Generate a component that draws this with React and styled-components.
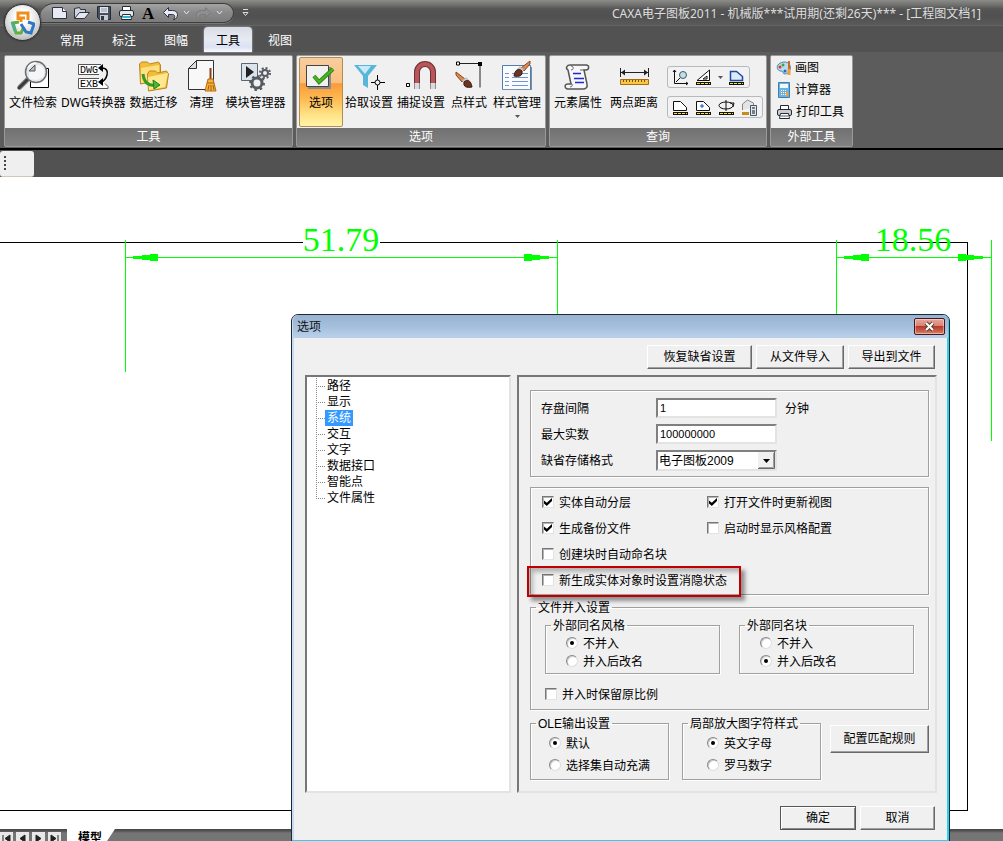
import React from 'react'
import styled, { createGlobalStyle, css } from 'styled-components'

const GlobalStyle = createGlobalStyle`
    * { box-sizing: border-box; }
    html, body { margin: 0; padding: 0; }
    body {
        font-family: "Noto Sans", "Noto Sans CJK SC", sans-serif;
        font-size: 12px;
        line-height: 16px;
        color: #000;
        background: #fff;
    }
    button, input, select { font: inherit; color: inherit; margin: 0; }
`

/* ---------- window ---------- */

const Window = styled.div`
    position: relative;
    display: flex;
    flex-direction: column;
    height: 100vh;
    overflow: hidden;
`

const TitleBar = styled.header`
    display: flex;
    align-items: flex-start;
    flex: none;
    height: 26px;
    padding-left: 40px;
    background: linear-gradient(#8c8c89 0, #6a6a68 6px, #555 9px, #505050 16px, #5a5a5a 25px, #636363 25px);
`

const Title = styled.h1`
    margin: 6px 22px 0 auto;
    font-size: 12px;
    font-weight: normal;
    color: #dedede;
    white-space: nowrap;
`

const AppButton = styled.button`
    position: absolute;
    left: 4px;
    top: 4px;
    z-index: 2;
    width: 37px;
    height: 37px;
    padding: 0;
    border: 1px solid #333;
    border-radius: 50%;
    background: radial-gradient(circle at 50% 35%, #fff 25%, #d6d6d6 60%, #9c9c9c);
    box-shadow: 0 0 2px #222;
    svg { display: block; margin: 5px auto; }
`

const QuickBar = styled.div`
    display: flex;
    align-items: center;
    height: 20px;
    margin-top: 3px;
    padding: 0 8px 0 9px;
    border: 1px solid #3e3e3e;
    border-left: 0;
    border-radius: 14px 10px 10px 0;
    background: linear-gradient(#a3a3a3, #888 50%, #7c7c7c);
    box-shadow: 0 1px 0 #777;
`

const QuickButton = styled.button`
    display: flex;
    align-items: center;
    justify-content: center;
    width: ${p => p.$narrow ? 11 : 22}px;
    height: 18px;
    padding: 0;
    border: 0;
    background: none;
`

const MoreButton = styled(QuickButton)`
    margin-top: 4px;
`

const TabRow = styled.nav`
    display: flex;
    align-items: flex-end;
    gap: 4px;
    flex: none;
    height: 27px;
    padding-left: 48px;
    background: #525252;
    border-bottom: 1px solid #5c5c5c;
`

const Tab = styled.button`
    width: 48px;
    height: 25px;
    padding: 2px 0 0;
    border: 0;
    border-radius: 4px 4px 0 0;
    background: none;
    color: #fff;
    ${p => p.$active && css`
        color: #000;
        background: linear-gradient(#d9dde6, #e8eaf2 50%, #dce2f4 80%, #f8f9fd);
        box-shadow: 0 0 2px #ccc;
    `}
`

/* ---------- ribbon ---------- */

const Ribbon = styled.div`
    display: flex;
    gap: 3px;
    flex: none;
    height: 97px;
    padding: 2px 4px;
    background: #5c5c5c;
    border-bottom: 2px solid #000;
`

const Panel = styled.section`
    display: flex;
    flex-direction: column;
    flex: none;
    width: ${p => p.$width}px;
    height: 92px;
    border: 1px solid #999;
    border-radius: 2px;
    background: #f0f0f0;
`

const PanelBody = styled.div`
    display: flex;
    flex: 1;
    padding: 1px 2px 0;
`

const PanelTitle = styled.h2`
    margin: 0;
    height: 18px;
    font-size: 12px;
    font-weight: normal;
    line-height: 17px;
    text-align: center;
    color: #fff;
    background: linear-gradient(#717171, #828282);
`

const BigButton = styled.button`
    display: flex;
    flex-direction: column;
    align-items: center;
    flex: none;
    min-width: 44px;
    height: 70px;
    padding: 2px 2px 0;
    border: 1px solid transparent;
    border-width: 1px 0;
    background: none;
    white-space: nowrap;
    span { margin-top: 3px; }
    ${p => p.$active && css`
        border: 1px solid #b08d54;
        border-radius: 2px;
        background: linear-gradient(#f8cda0, #fbc07e 36%, #fb9a3a 38%, #fdbd55 62%, #ffe58a 85%, #fff3a8);
    `}
`

const QueryTools = styled.div`
    display: flex;
    flex-direction: column;
    align-items: flex-start;
    gap: 8px;
    padding: 9px 0 0 3px;
`

const ToolStrip = styled.div`
    display: flex;
    align-items: center;
    height: 22px;
    padding: 0 1px;
    border: 1px solid #b4bac0;
    border-radius: 3px;
    background: #f2f2f2;
`

const SmallTool = styled.button`
    display: flex;
    align-items: center;
    justify-content: center;
    width: ${p => p.$narrow ? 10 : 23}px;
    height: 20px;
    padding: 0;
    border: 0;
    background: none;
`

const LinkTools = styled.div`
    display: flex;
    flex-direction: column;
    gap: 2px;
    padding: 1px 3px 0;
`

const LinkTool = styled.button`
    display: flex;
    align-items: center;
    gap: 3px;
    height: 20px;
    padding: 0;
    border: 0;
    background: none;
    white-space: nowrap;
`

const DockRow = styled.div`
    flex: none;
    height: 27px;
    padding-top: 1px;
    background: #525252;
`

const DockStub = styled.div`
    width: 34px;
    height: 26px;
    padding: 5px 4px;
    border-radius: 3px;
    background: #efefef;
    border-bottom: 1px solid #cfc9b4;
    svg { display: block; }
`

/* ---------- drawing area ---------- */

const Sheet = styled.main`
    flex: 1;
    min-height: 0;
    background: #fff;
    svg { display: block; width: 100%; height: 100%; }
`

const Footer = styled.footer`
    display: flex;
    align-items: flex-start;
    flex: none;
    height: 12px;
    overflow: hidden;
    background: linear-gradient(#444 0, #555 2px, #757575 4px, #757575);
`

const PageButton = styled.button`
    display: flex;
    align-items: center;
    justify-content: center;
    width: 13px;
    height: 13px;
    margin: 3px 3px 0 0;
    padding: 0;
    border: 0;
    background: #e8e8e8;
`

const SheetTab = styled.button`
    width: 48px;
    height: 18px;
    margin-left: 3px;
    padding: 0 10px 0 8px;
    border: 0;
    background: #fff;
    clip-path: polygon(0 0, 100% 0, 36px 100%, 0 100%);
    font-weight: bold;
    line-height: 16px;
    white-space: nowrap;
`

/* ---------- dialog ---------- */

const Dialog = styled.div`
    position: absolute;
    left: 291px;
    top: 314px;
    width: 659px;
    border: 1px solid #1c2a38;
    border-radius: 7px 7px 0 0;
    background: #f0f0f0;
    box-shadow: inset -2px -1px 0 #2fd0ee, inset 2px 0 0 #c9dcef;
    padding: 0 2px 2px;
    font-family: "Liberation Sans", "Noto Sans CJK SC", sans-serif;
`

const DialogTitle = styled.div`
    display: flex;
    justify-content: space-between;
    height: 23px;
    margin: 0 -1px;
    padding: 0 3px 0 4px;
    border-radius: 6px 6px 0 0;
    line-height: 24px;
    color: #111;
    background: linear-gradient(#98b2d0, #a4bfdc 50%, #bad1ea);
`

const CloseButton = styled.button`
    display: flex;
    align-items: center;
    justify-content: center;
    width: 31px;
    height: 17px;
    margin-top: 3px;
    padding: 0;
    border: 1px solid #4a1518;
    border-radius: 2px;
    background: linear-gradient(#e8a79b, #d98474 45%, #b8392a 50%, #c9604a 80%, #d98874);
    box-shadow: inset 0 0 0 1px rgba(255, 255, 255, .4);
`

const DialogBody = styled.div`
    padding: 7px 12px 9px 11px;
`

const ButtonRow = styled.div`
    display: flex;
    justify-content: flex-end;
    gap: 4px;
`

const PushButton = styled.button`
    width: ${p => p.$width}px;
    height: ${p => p.$tall ? 28 : 24}px;
    padding: 0;
    border: 1px solid;
    border-color: #fff #696969 #696969 #fff;
    background: #f0f0f0;
    box-shadow: inset -1px -1px 0 #a0a0a0;
    white-space: nowrap;
    ${p => p.$primary && css`
        border-color: #555;
        box-shadow: inset 1px 1px 0 #fff, inset -1px -1px 0 #888;
    `}
`

const Panes = styled.div`
    display: grid;
    grid-template-columns: 206px 1fr;
    gap: 6px;
    margin: 6px 0 13px;
`

const Tree = styled.ul`
    margin: 0;
    padding: 1px 0 0 9px;
    list-style: none;
    background: #fff;
    border: 2px solid;
    border-color: #777 #e3e3e3 #e3e3e3 #777;
`

const TreeItem = styled.li`
    display: flex;
    height: 16px;
    &::before {
        content: "";
        width: 9px;
        height: ${p => p.$last ? 9 : 16}px;
        background:
            repeating-linear-gradient(90deg, #888 0 1px, transparent 1px 2px) 0 8px / 9px 1px no-repeat,
            repeating-linear-gradient(#888 0 1px, transparent 1px 2px) 0 0 / 1px 100% no-repeat;
    }
    button {
        height: 16px;
        padding: 0 2px;
        border: 0;
        line-height: 16px;
        background: ${p => p.$selected ? '#3399ff' : 'none'};
        color: ${p => p.$selected ? '#fff' : '#000'};
    }
`

const Page = styled.div`
    padding: 13px 6px 11px 11px;
    border: 2px solid;
    border-color: #777 #e3e3e3 #e3e3e3 #777;
`

const etched = css`
    border: 1px solid #a0a0a0;
    box-shadow: 1px 1px 0 #fff, inset 1px 1px 0 #fff;
`

const FieldGroup = styled.div`
    ${etched}
    display: grid;
    grid-template-columns: 115px 121px 1fr;
    grid-auto-rows: 20px;
    row-gap: 6px;
    align-items: center;
    padding: 7px 10px 6px;
    label, span { padding-top: 2px; }
`

const TextBox = styled.input`
    width: 100%;
    height: 20px;
    padding: 0 2px;
    border: 2px solid;
    border-color: #808080 #e3e3e3 #e3e3e3 #808080;
    border-radius: 0;
    background: #fff;
    font-size: 11px;
    outline: 0;
`

const SelectBox = styled.div`
    position: relative;
    select {
        display: block;
        width: 100%;
        height: 21px;
        padding: 1px 1px 0;
        appearance: none;
        border: 2px solid;
        border-color: #808080 #e3e3e3 #e3e3e3 #808080;
        border-radius: 0;
        background: #fff;
    }
    svg {
        position: absolute;
        right: 2px;
        top: 2px;
        pointer-events: none;
    }
`

const Unit = styled.span`
    padding-left: 8px;
`

const CheckGroup = styled.div`
    ${etched}
    display: grid;
    grid-template-columns: 165px 1fr;
    row-gap: 6px;
    margin-top: 10px;
    padding: 4px 11px;
`

const Option = styled.label`
    position: relative;
    display: flex;
    align-items: center;
    gap: 5px;
    height: ${p => p.$height || 20}px;
    grid-column: ${p => p.$wide ? '1 / -1' : 'auto'};
    white-space: nowrap;
`

const OptionText = styled.span`
    padding-top: 2px;
`

const CheckInput = styled.input`
    appearance: none;
    flex: none;
    width: 12px;
    height: 12px;
    border: 1px solid;
    border-color: #777 #e3e3e3 #e3e3e3 #777;
    background: #fff;
    box-shadow: inset 1px 1px 0 #b4b4b4;
    &:checked::before {
        content: "";
        display: block;
        width: 8px;
        height: 8px;
        margin: 1px;
        background: #000;
        clip-path: polygon(0 30%, 35% 60%, 100% 0, 100% 38%, 35% 100%, 0 68%);
    }
`

const RadioInput = styled(CheckInput)`
    border-radius: 50%;
    border-color: #888 #ddd #ddd #888;
    box-shadow: inset 1px 1px 0 #ccc;
    &:checked::before {
        width: 4px;
        height: 4px;
        margin: 3px;
        border-radius: 50%;
        clip-path: none;
    }
`

const Highlight = styled.span`
    position: absolute;
    left: -15px;
    top: -4px;
    width: 214px;
    height: 31px;
    border: 2px solid #c00000;
    box-shadow: 4px 4px 4px rgba(0, 0, 0, .4), inset 4px 4px 4px rgba(0, 0, 0, .25);
    pointer-events: none;
`

const Fieldset = styled.fieldset`
    ${etched}
    min-width: 0;
    width: ${p => p.$width ? p.$width + 'px' : 'auto'};
    margin: ${p => p.$top || 0}px 0 0;
    padding: 0 5px;
    legend {
        height: 14px;
        padding: 0 2px;
        line-height: 16px;
    }
`

const MergeBody = styled.div`
    padding: 4px 8px 5px 9px;
`

const MergeRow = styled.div`
    display: flex;
    gap: 19px;
    margin-bottom: 10px;
`

const RadioList = styled.div`
    padding: 2px 0 3px ${p => p.$indent}px;
`

const BottomRow = styled.div`
    display: flex;
    align-items: flex-start;
    margin-top: 6px;
    fieldset { margin-right: 13px; }
    fieldset + fieldset { margin-right: 9px; }
    > button { margin-top: 9px; }
`

/* ---------- icons ---------- */

const LogoIcon = () => (
    <svg width="25" height="25" viewBox="0 0 25 25" fill="none" strokeWidth="3">
        <path d="M8 10V3h10v7M15 8h-4v4" stroke="#ef8e1d" />
        <path d="M9 12l-6 1 3 10h5l3-6" stroke="#63ae3c" />
        <path d="M2 12l3 9" stroke="#4cae8e" />
        <path d="M11 14l5 8 5 1 3-9-6-2" stroke="#2c78c5" />
    </svg>
)

const NewIcon = () => (
    <svg width="18" height="14" viewBox="0 0 18 14">
        <path d="M1.500 1.500h10l4 4v7h-14z" fill="#e7eaf2" stroke="#2d3340" />
        <path d="M11.500 1.500v4h4" fill="#fff" stroke="#2d3340" />
    </svg>
)

const OpenIcon = () => (
    <svg width="18" height="14" viewBox="0 0 18 14" stroke="#2d3340" strokeLinejoin="round">
        <path d="M1.500 12.500v-10l5-1 1 2h5v3" fill="#cfd4df" />
        <path d="M1.500 12.500l5-6h10l-5 6z" fill="#e4e8f1" />
    </svg>
)

const SaveIcon = () => (
    <svg width="16" height="16" viewBox="0 0 16 16">
        <path d="M1.500 1.500h13v13h-11l-2-2z" fill="#4a515e" stroke="#252b36" />
        <path d="M4 2h8v6H4z" fill="#dfe5ef" />
        <path d="M5 4h6M5 6h6" stroke="#8e97a8" />
        <path d="M4 10h8v5H4z" fill="#c5ccd8" />
        <path d="M5 11h3v4H5z" fill="#303744" />
    </svg>
)

const PrintIcon = ({ plain }) => (
    <svg width="17" height="16" viewBox="0 0 17 16" stroke="#222a33">
        <path d="M4.500 5.500v-4h8v4" fill="#fff" />
        <rect x="1.500" y="5.500" width="14" height="6" rx="1.500" fill={plain ? '#c9ccd2' : '#e4e8ee'} />
        <path d="M4.500 9.500h8l1 5h-10z" fill="#fff" />
        <path d="M5 12h7" stroke={plain ? '#aaa' : '#27b4d8'} strokeWidth="2" />
    </svg>
)

const LetterIcon = () => (
    <svg width="16" height="18" viewBox="0 0 16 18">
        <text x="2" y="15" fontFamily="Liberation Serif, serif" fontSize="17" fontWeight="bold">A</text>
    </svg>
)

const UndoIcon = ({ dim }) => (
    <svg width="17" height="15" viewBox="0 0 17 15">
        <g transform={dim ? 'matrix(-1 0 0 1 17 0)' : undefined}>
            <path
                d="M1.500 6.500l5-5v3h4c7 0 6 8 1 9.500 2-3 1.500-5.500-1-5.500h-4v3z"
                fill={dim ? '#8f8f8f' : '#e8ecf4'}
                stroke={dim ? '#7a7a7a' : '#2d3340'}
            />
        </g>
    </svg>
)

const ChevronIcon = () => (
    <svg width="7" height="6" viewBox="0 0 7 6">
        <path d="M1 1l2.500 3L6 1" fill="none" stroke="#e6e6e6" />
    </svg>
)

const MoreIcon = () => (
    <svg width="7" height="8" viewBox="0 0 7 8" fill="none" stroke="#ddd">
        <path d="M1 .5h5M1 3.500h5l-2.500 3z" />
    </svg>
)

const Arrow = () => (
    <svg width="5" height="3" viewBox="0 0 5 3"><path d="M0 0h5L2.500 3z" fill="#555" /></svg>
)

const Big = ({ children }) => (
    <svg width="32" height="32" viewBox="0 0 32 32" fill="none">{children}</svg>
)

const SearchIcon = () => (
    <Big>
        <path d="M13.500 8.500h18v19h-18z" fill="#fff" stroke="#000" />
        <path d="M11 19l-8 8" stroke="#888" strokeWidth="5" strokeLinecap="round" />
        <path d="M10 20l-8 8" stroke="#3b3b3b" strokeWidth="3" strokeLinecap="round" />
        <circle cx="19" cy="12" r="10.500" fill="#e3e6e8" stroke="#6c7074" strokeWidth="1.500" />
        <path d="M12 19V11l6-6h5a8 8 0 0 1 3 12l-6 3z" fill="#f5f6f7" />
        <path d="M12 11h6V5z" fill="#bbb" stroke="#555" />
        <path d="M11 8a9 9 0 0 1 8-5" stroke="#fff" strokeWidth="1.500" />
    </Big>
)

const ConvertIcon = () => (
    <Big>
        <path d="M24 4.500H1.500v10H22M22 18.500H1.500v10H31v-2l-3-3" fill="#fff" stroke="#555" />
        <text x="3" y="13" fill="#000" fontFamily="Liberation Mono, monospace" fontSize="10">DWG</text>
        <text x="3" y="27" fill="#000" fontFamily="Liberation Mono, monospace" fontSize="10">EXB</text>
        <path d="M25 8c5 0 6 4 5 7-1 4-3 6-6 7" stroke="#000" strokeWidth="1.500" />
        <path d="M21 8l5-4v8zM21 22l5-4v8z" fill="#000" />
    </Big>
)

const MigrateIcon = () => (
    <Big>
        <path d="M2.500 4l2-2h6l2 2 9-2 2 3v15l-20 4z" fill="#f2bd38" stroke="#bd861b" />
        <path d="M4 8l18-3v15L4 23z" fill="#ffe184" />
        <path d="M10.500 14l2-3h6l2 2 9-2 2 3-2 14-18 3z" fill="#f2bd38" stroke="#bd861b" />
        <path d="M11 17l20-4-3 14-16 3z" fill="#ffe88f" />
        <path d="M6 14c1 9 6 12 12 11" stroke="#329a27" strokeWidth="3" />
        <path d="M16 20l7 5-6 4z" fill="#4bb63a" stroke="#1e7f18" />
    </Big>
)

const CleanIcon = () => (
    <Big>
        <path d="M11.500.500h17v29h-25v-21z" fill="#f8f8f8" stroke="#333" />
        <path d="M11.500.500v8h-8z" fill="#ddd" stroke="#333" />
        <path d="M25.500 8v13" stroke="#8a3f1d" strokeWidth="2" />
        <path d="M23 19h5l3 12H20z" fill="#f5b33b" stroke="#b56c12" />
        <path d="M22 23h7M24 25l-1 5M26 25v6M28 25l1 5" stroke="#a85e0d" />
    </Big>
)

const ModuleIcon = () => (
    <Big>
        <path d="M2.500 3.500h16v17h-16z" fill="#dbe4ec" stroke="#5a6672" />
        <path d="M7 6l8 6-8 6z" fill="#222" />
        <circle cx="18" cy="23" r="5" fill="#f0f0f0" stroke="#555b60" strokeWidth="3" />
        <circle cx="18" cy="23" r="7" stroke="#555b60" strokeWidth="2" strokeDasharray="2.500 3" />
        <circle cx="26" cy="13" r="3" stroke="#555b60" strokeWidth="2" />
        <circle cx="26" cy="13" r="5" stroke="#555b60" strokeWidth="2" strokeDasharray="2 1.920" />
    </Big>
)

const OptionIcon = () => (
    <Big>
        <path d="M3 7h23v22H3z" fill="#8a8a8a" />
        <path d="M1.500 5.500h22v21h-22z" fill="#f1f1f1" stroke="#444" />
        <path d="M9 16l5 6L28 9" stroke="#2b8d0d" strokeWidth="4" />
        <path d="M9 16l5 6L28 9" stroke="#4eb422" strokeWidth="2" />
    </Big>
)

const FilterIcon = () => (
    <Big>
        <path d="M1 5h23L15 16v12l-5-3v-9z" fill="#58b6da" />
        <path d="M5 6h13l-6 8z" fill="#c7ebf7" />
        <path d="M24.500 15v5M24.500 25v5M18 22.500h4M27 22.500h5" stroke="#000" />
        <circle cx="24.500" cy="22.500" r="2.500" fill="#f0f0f0" stroke="#000" />
    </Big>
)

const MagnetIcon = () => (
    <Big>
        <path d="M12 29V12a8 8 0 0 1 16 0v17" stroke="#6f2f33" strokeWidth="6" />
        <path d="M12 24V12a8 8 0 0 1 16 0v12" stroke="#b8565a" strokeWidth="4" />
        <path d="M12 23v6M28 23v6" stroke="#d4dde2" strokeWidth="5" />
        <path d="M1.500 23.500h3v3h-3z" fill="#fff" stroke="#000" />
    </Big>
)

const Brush = () => (
    <>
        <path d="M1 1l9 7-3 3-6-7z" fill="#d88a55" stroke="#8d4520" />
        <path d="M7 10l4-4 3 3-3 4z" fill="#c8c8c8" />
        <path d="M9 11c3-3 7-2 8 5-5 1-9 0-8-5z" fill="#6d3520" stroke="#3a1a10" />
    </>
)

const PointStyleIcon = () => (
    <Big>
        <path d="M5 3.500h22v24" stroke="#222" />
        <path d="M3.500 2h3v3h-3z" fill="#fff" stroke="#000" />
        <path d="M25 2h4v4h-4z" fill="#000" />
        <g transform="translate(2 11)"><Brush /></g>
    </Big>
)

const StyleIcon = () => (
    <Big>
        <path d="M1.500 5.500h28v24h-28z" fill="#f8fbff" stroke="#567da8" />
        <path d="M2 29.500h28M30.500 7v23" stroke="#7890a8" />
        <path d="M4 13.500h4M4 17.500h4M4 21.500h4M4 25.500h4M11 13.500h16M11 17.500h16M11 21.500h16M11 25.500h16" stroke="#7896c4" />
        <g transform="matrix(-1 0 0 1 30 0)"><Brush /></g>
    </Big>
)

const ScrollIcon = () => (
    <Big>
        <path d="M8 5h16c4 0 3 5 0 5h-2l3 14c1 4-2 5-4 5H6c-4 0-4-6 1-5h2L6 10C3 8 5 5 8 5z" fill="#f7f7f7" stroke="#555" strokeWidth="1.500" />
        <path d="M9 6c3 0 3 4 0 4M22 10h-4M8 23c3 0 3 4 0 4" stroke="#666" />
        <path d="M11 13.500h8M12 18.500h10M13 22.500h9" stroke="#1b28d6" strokeWidth="1.500" />
    </Big>
)

const DistanceIcon = () => (
    <Big>
        <path d="M2.500 8v9M30.500 8v9M3 12.500h27" stroke="#222" />
        <path d="M3 12.500l4-3v6zM30 12.500l-4-3v6z" fill="#222" />
        <path d="M2.500 19.500h28v5h-28z" fill="#f8c93f" stroke="#a66b1a" />
        <path d="M5.500 20v2M8.500 20v2M11.500 20v2M14.500 20v2M17.500 20v2M20.500 20v2M23.500 20v2M26.500 20v2" stroke="#7f4c10" />
    </Big>
)

const Small = ({ children, bare }) => (
    <svg width="17" height="17" viewBox="0 0 17 17" fill="none" stroke="#111">
        {children}
        {!bare && <path d="M1 14.500h15" stroke="#111" strokeWidth="3" />}
        {!bare && <path d="M2 14.500h13" stroke="#ffe81a" strokeDasharray="3 1" />}
    </svg>
)

const smallTools = {
    angle: <Small bare><path d="M2.500 1v13.500H16M1 3l1.500-2L4 3M14 13l2 1.500-2 1.500M4 13l5-5" /><circle cx="11" cy="6" r="3.500" fill="#bfe0e5" stroke="#456" /></Small>,
    slope: <Small><path d="M2 11.500h12.500V1zM8 10l4-3v3z" fill="#fff" /></Small>,
    areaBlue: <Small><path d="M2.500 11.500v-9h6l6 5v4z" fill="#dcebfa" stroke="#1f4aa0" strokeWidth="1.500" /></Small>,
    area: <Small><path d="M1.500 11.500v-9h7l6 6v3z" fill="#fff" /></Small>,
    center: <Small><path d="M1.500 11.500v-9h7l6 6v3z" fill="#fff" /><path d="M7 5v4M5 7h4" stroke="#1a4fd0" /></Small>,
    inertia: <Small><ellipse cx="8" cy="6.500" rx="7" ry="3.500" /><path d="M8 1v11M12 4l4 0-1 4" /></Small>,
    weight: <Small bare><path d="M1.500 11V5l5-4 6 3v4" fill="#e4e4e4" stroke="#888" /><path d="M1 14.500h7" stroke="#c88a1d" strokeWidth="3" /><path d="M9.500 6.500h6v10h-6z" fill="#dfeaf0" stroke="#456" /><path d="M11 9h3M11 12h3M11 14h3" /></Small>
}

const PaintIcon = () => (
    <svg width="16" height="16" viewBox="0 0 16 16">
        <path d="M8 2c9 0 8 11 1 12-3 0-1-3-4-3-5 0-6-8 3-9z" fill="#b9dbee" stroke="#4a88ae" />
        <circle cx="4" cy="7" r="1.500" fill="#d93a2b" />
        <circle cx="7" cy="5" r="1.500" fill="#43a53c" />
        <circle cx="9" cy="11" r="1.500" fill="#3060c8" />
        <path d="M13 1v8" stroke="#cf6820" strokeWidth="2" />
        <path d="M13 9v6" stroke="#f0a038" strokeWidth="3" />
    </svg>
)

const CalcIcon = () => (
    <svg width="16" height="16" viewBox="0 0 16 16">
        <path d="M2.500.500h11v15h-11z" fill="#6db1de" stroke="#3b7fb0" />
        <path d="M4 2h8v4H4z" fill="#eef8fd" />
        <path d="M5 8.500h6M5 10.500h6M5 12.500h6" stroke="#fff" strokeDasharray="1 1" />
        <path d="M10 10h2v4h-2z" fill="#f1a040" />
    </svg>
)

/* ---------- parts ---------- */

const tools = [
    ['文件检索', <SearchIcon />],
    ['DWG转换器', <ConvertIcon />],
    ['数据迁移', <MigrateIcon />],
    ['清理', <CleanIcon />],
    ['模块管理器', <ModuleIcon />]
]

const options = [
    ['选项', <OptionIcon />],
    ['拾取设置', <FilterIcon />],
    ['捕捉设置', <MagnetIcon />],
    ['点样式', <PointStyleIcon />],
    ['样式管理', <StyleIcon />]
]

const queries = [
    ['元素属性', <ScrollIcon />],
    ['两点距离', <DistanceIcon />]
]

const QueryButton = styled(BigButton)`
    margin-right: 4px;
`

const DropMark = styled.i`
    display: flex;
    margin-top: 4px;
`

const RibbonBar = () => (
    <Ribbon>
        <Panel $width={289}>
            <PanelBody>
                {tools.map(([name, icon]) => <BigButton key={name}>{icon}<span>{name}</span></BigButton>)}
            </PanelBody>
            <PanelTitle>工具</PanelTitle>
        </Panel>
        <Panel $width={250}>
            <PanelBody>
                {options.map(([name, icon]) => (
                    <BigButton key={name} $active={name === '选项'}>
                        {icon}<span>{name}</span>
                        {name === '样式管理' && <DropMark><Arrow /></DropMark>}
                    </BigButton>
                ))}
            </PanelBody>
            <PanelTitle>选项</PanelTitle>
        </Panel>
        <Panel $width={218}>
            <PanelBody>
                {queries.map(([name, icon]) => <QueryButton key={name}>{icon}<span>{name}</span></QueryButton>)}
                <QueryTools>
                    <ToolStrip>
                        <SmallTool aria-label="坐标">{smallTools.angle}</SmallTool>
                        <SmallTool aria-label="角度">{smallTools.slope}</SmallTool>
                        <SmallTool aria-label="更多" $narrow><Arrow /></SmallTool>
                        <SmallTool aria-label="周长">{smallTools.areaBlue}</SmallTool>
                    </ToolStrip>
                    <ToolStrip>
                        <SmallTool aria-label="面积">{smallTools.area}</SmallTool>
                        <SmallTool aria-label="重心">{smallTools.center}</SmallTool>
                        <SmallTool aria-label="惯性矩">{smallTools.inertia}</SmallTool>
                        <SmallTool aria-label="重量">{smallTools.weight}</SmallTool>
                    </ToolStrip>
                </QueryTools>
            </PanelBody>
            <PanelTitle>查询</PanelTitle>
        </Panel>
        <Panel $width={83}>
            <PanelBody>
                <LinkTools>
                    <LinkTool><PaintIcon />画图</LinkTool>
                    <LinkTool><CalcIcon />计算器</LinkTool>
                    <LinkTool><PrintIcon plain />打印工具</LinkTool>
                </LinkTools>
            </PanelBody>
            <PanelTitle>外部工具</PanelTitle>
        </Panel>
    </Ribbon>
)

const arrowHead = 'M8 -1h9v3h-9zM17 -2h8v5h-8zM25 -3h8v7h-8z'

const Drawing = () => (
    <Sheet>
        <svg shapeRendering="crispEdges">
            <g stroke="#000" fill="none">
                <path d="M0 65.500h303M380 65.500h587.500V633.500H0" />
            </g>
            <g stroke="#0f0" fill="none">
                <path d="M125.500 63v132M557.500 63v200M125 80.500h432" />
                <path d="M836.500 63v200M991.500 63v201M836 80.500h155" />
            </g>
            <g fill="#0f0">
                <path d={arrowHead} transform="translate(125 80)" />
                <path d={arrowHead} transform="matrix(-1 0 0 1 557 80)" />
                <path d={arrowHead} transform="translate(836 80)" />
                <path d={arrowHead} transform="matrix(-1 0 0 1 991 80)" />
            </g>
            <g fill="#0f0" fontFamily="Liberation Serif, serif" fontSize="34" textAnchor="middle">
                <text x="341" y="74">51.79</text>
                <text x="913" y="74">18.56</text>
            </g>
        </svg>
    </Sheet>
)

const pageArrows = [
    ['首页', 'M1 1v7M8 1v7L3 4.500z'],
    ['上一页', 'M7 1v7L2 4.500z'],
    ['下一页', 'M2 1v7l5-3.500z'],
    ['末页', 'M8 1v7M1 1v7l5-3.500z']
]

const Check = ({ label, checked, wide, marked }) => (
    <Option $wide={wide}>
        <CheckInput type="checkbox" defaultChecked={checked} />
        <OptionText>{label}</OptionText>
        {marked && <Highlight />}
    </Option>
)

const Radios = ({ name, items, selected, indent, height }) => (
    <RadioList $indent={indent}>
        {items.map(item => (
            <Option key={item} $height={height}>
                <RadioInput type="radio" name={name} defaultChecked={item === selected} />
                <OptionText>{item}</OptionText>
            </Option>
        ))}
    </RadioList>
)

const sections = ['路径', '显示', '系统', '交互', '文字', '数据接口', '智能点', '文件属性']

const OptionsDialog = () => (
    <Dialog role="dialog" aria-labelledby="options-title">
        <DialogTitle>
            <span id="options-title">选项</span>
            <CloseButton aria-label="关闭">
                <svg width="13" height="11" viewBox="0 0 13 11" fill="none">
                    <path d="M3 2l7 7M10 2L3 9" stroke="#543" strokeWidth="4" />
                    <path d="M3 2l7 7M10 2L3 9" stroke="#fff" strokeWidth="2" />
                </svg>
            </CloseButton>
        </DialogTitle>
        <DialogBody>
            <ButtonRow>
                <PushButton $width={105}>恢复缺省设置</PushButton>
                <PushButton $width={88}>从文件导入</PushButton>
                <PushButton $width={87}>导出到文件</PushButton>
            </ButtonRow>
            <Panes>
                <Tree>
                    {sections.map((name, i) => (
                        <TreeItem key={name} $selected={name === '系统'} $last={i === sections.length - 1}>
                            <button>{name}</button>
                        </TreeItem>
                    ))}
                </Tree>
                <Page>
                    <FieldGroup>
                        <label htmlFor="interval">存盘间隔</label>
                        <TextBox id="interval" defaultValue="1" />
                        <Unit>分钟</Unit>
                        <label htmlFor="max-real">最大实数</label>
                        <TextBox id="max-real" defaultValue="100000000" />
                        <span />
                        <label htmlFor="format">缺省存储格式</label>
                        <SelectBox>
                            <select id="format"><option>电子图板2009</option></select>
                            <svg width="17" height="17" viewBox="0 0 17 17">
                                <path d="M0 0h17v17H0z" fill="#f0f0f0" />
                                <path d="M16.500 0v16.500H0" fill="none" stroke="#696969" />
                                <path d="M15.500 1v14.500H1" fill="none" stroke="#a0a0a0" />
                                <path d="M5 7h7l-3.500 4z" />
                            </svg>
                        </SelectBox>
                    </FieldGroup>
                    <CheckGroup>
                        <Check label="实体自动分层" checked />
                        <Check label="打开文件时更新视图" checked />
                        <Check label="生成备份文件" checked />
                        <Check label="启动时显示风格配置" />
                        <Check label="创建块时自动命名块" wide />
                        <Check label="新生成实体对象时设置消隐状态" wide marked />
                    </CheckGroup>
                    <Fieldset $top={5}>
                        <legend>文件并入设置</legend>
                        <MergeBody>
                            <MergeRow>
                                <Fieldset $width={175}>
                                    <legend>外部同名风格</legend>
                                    <Radios name="style" items={['不并入', '并入后改名']} selected="不并入" indent={15} height={18} />
                                </Fieldset>
                                <Fieldset $width={175}>
                                    <legend>外部同名块</legend>
                                    <Radios name="block" items={['不并入', '并入后改名']} selected="并入后改名" indent={15} height={18} />
                                </Fieldset>
                            </MergeRow>
                            <Check label="并入时保留原比例" />
                        </MergeBody>
                    </Fieldset>
                    <BottomRow>
                        <Fieldset $width={139}>
                            <legend>OLE输出设置</legend>
                            <Radios name="ole" items={['默认', '选择集自动充满']} selected="默认" indent={13} height={22} />
                        </Fieldset>
                        <Fieldset $width={139}>
                            <legend>局部放大图字符样式</legend>
                            <Radios name="detail" items={['英文字母', '罗马数字']} selected="英文字母" indent={19} height={22} />
                        </Fieldset>
                        <PushButton $width={99} $tall>配置匹配规则</PushButton>
                    </BottomRow>
                </Page>
            </Panes>
            <ButtonRow>
                <PushButton $width={76} $primary>确定</PushButton>
                <PushButton $width={75}>取消</PushButton>
            </ButtonRow>
        </DialogBody>
    </Dialog>
)

const App = () => (
    <Window lang="zh-CN">
        <GlobalStyle />
        <AppButton aria-label="菜单"><LogoIcon /></AppButton>
        <TitleBar>
            <QuickBar>
                <QuickButton aria-label="新建"><NewIcon /></QuickButton>
                <QuickButton aria-label="打开"><OpenIcon /></QuickButton>
                <QuickButton aria-label="保存"><SaveIcon /></QuickButton>
                <QuickButton aria-label="打印"><PrintIcon /></QuickButton>
                <QuickButton aria-label="文字"><LetterIcon /></QuickButton>
                <QuickButton aria-label="撤销"><UndoIcon /></QuickButton>
                <QuickButton aria-label="撤销列表" $narrow><ChevronIcon /></QuickButton>
                <QuickButton aria-label="重做"><UndoIcon dim /></QuickButton>
                <QuickButton aria-label="重做列表" $narrow><ChevronIcon /></QuickButton>
            </QuickBar>
            <MoreButton aria-label="自定义"><MoreIcon /></MoreButton>
            <Title>CAXA电子图板2011 - 机械版***试用期(还剩26天)*** - [工程图文档1]</Title>
        </TitleBar>
        <TabRow>
            {['常用', '标注', '图幅', '工具', '视图'].map(name => (
                <Tab key={name} $active={name === '工具'}>{name}</Tab>
            ))}
        </TabRow>
        <RibbonBar />
        <DockRow>
            <DockStub>
                <svg width="2" height="15"><path d="M1 0v15" stroke="#444" strokeWidth="2" strokeDasharray="2 2" /></svg>
            </DockStub>
        </DockRow>
        <Drawing />
        <Footer>
            {pageArrows.map(([name, d]) => (
                <PageButton key={name} aria-label={name}>
                    <svg width="9" height="9" viewBox="0 0 9 9"><path d={d} fill="#222" stroke="#222" /></svg>
                </PageButton>
            ))}
            <SheetTab>模型</SheetTab>
        </Footer>
        <OptionsDialog />
    </Window>
)

export default App
